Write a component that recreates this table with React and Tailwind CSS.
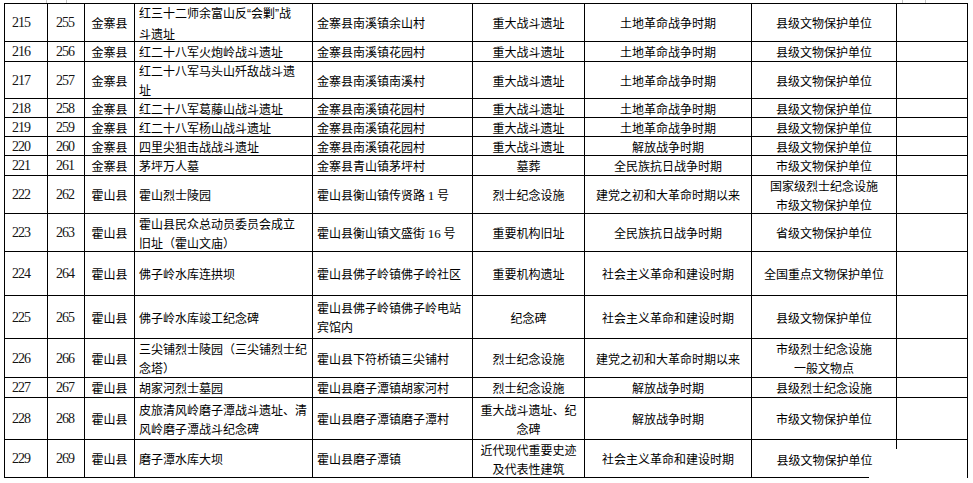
const serif = "font-['Liberation_Serif','Times_New_Roman',serif]";

const N = ({ children }) => (
  <span className="font-['Liberation_Serif','Times_New_Roman',serif] text-[13px]">{children}</span>
);

// narrow quote marks, as in the original document
const Q = ({ children }) => (
  <span className="font-['Liberation_Sans',Arial,sans-serif]">{children}</span>
);

// [序号, 编号, 县区, 名称, 地址, 类别, 时期, 保护级别]
const rows = [
  ["215", "255", "金寨县", [<>红三十二师余富山反<Q>“</Q>会剿<Q>”</Q>战</>, "斗遗址"], ["金寨县南溪镇余山村"], ["重大战斗遗址"], "土地革命战争时期", ["县级文物保护单位"]],
  ["216", "256", "金寨县", ["红二十八军火炮岭战斗遗址"], ["金寨县南溪镇花园村"], ["重大战斗遗址"], "土地革命战争时期", ["县级文物保护单位"]],
  ["217", "257", "金寨县", ["红二十八军马头山歼敌战斗遗", "址"], ["金寨县南溪镇南溪村"], ["重大战斗遗址"], "土地革命战争时期", ["县级文物保护单位"]],
  ["218", "258", "金寨县", ["红二十八军葛藤山战斗遗址"], ["金寨县南溪镇花园村"], ["重大战斗遗址"], "土地革命战争时期", ["县级文物保护单位"]],
  ["219", "259", "金寨县", ["红二十八军杨山战斗遗址"], ["金寨县南溪镇花园村"], ["重大战斗遗址"], "土地革命战争时期", ["县级文物保护单位"]],
  ["220", "260", "金寨县", ["四里尖狙击战战斗遗址"], ["金寨县南溪镇花园村"], ["重大战斗遗址"], "解放战争时期", ["县级文物保护单位"]],
  ["221", "261", "金寨县", ["茅坪万人墓"], ["金寨县青山镇茅坪村"], ["墓葬"], "全民族抗日战争时期", ["市级文物保护单位"]],
  ["222", "262", "霍山县", ["霍山烈士陵园"], [<>霍山县衡山镇传贤路 <N>1</N> 号</>], ["烈士纪念设施"], "建党之初和大革命时期以来", ["国家级烈士纪念设施", "市级文物保护单位"]],
  ["223", "263", "霍山县", ["霍山县民众总动员委员会成立", "旧址（霍山文庙）"], [<>霍山县衡山镇文盛街 <N>16</N> 号</>], ["重要机构旧址"], "全民族抗日战争时期", ["省级文物保护单位"]],
  ["224", "264", "霍山县", ["佛子岭水库连拱坝"], ["霍山县佛子岭镇佛子岭社区"], ["重要机构遗址"], "社会主义革命和建设时期", ["全国重点文物保护单位"]],
  ["225", "265", "霍山县", ["佛子岭水库竣工纪念碑"], ["霍山县佛子岭镇佛子岭电站", "宾馆内"], ["纪念碑"], "社会主义革命和建设时期", ["县级文物保护单位"]],
  ["226", "266", "霍山县", ["三尖铺烈士陵园（三尖铺烈士纪", "念塔）"], ["霍山县下符桥镇三尖铺村"], ["烈士纪念设施"], "建党之初和大革命时期以来", ["市级烈士纪念设施", "一般文物点"]],
  ["227", "267", "霍山县", ["胡家河烈士墓园"], ["霍山县磨子潭镇胡家河村"], ["烈士纪念设施"], "解放战争时期", ["县级烈士纪念设施"]],
  ["228", "268", "霍山县", ["皮旅清风岭磨子潭战斗遗址、清", "风岭磨子潭战斗纪念碑"], ["霍山县磨子潭镇磨子潭村"], ["重大战斗遗址、纪", "念碑"], "解放战争时期", ["市级文物保护单位"]],
  ["229", "269", "霍山县", ["磨子潭水库大坝"], ["霍山县磨子潭镇"], ["近代现代重要史迹", "及代表性建筑"], "社会主义革命和建设时期", ["县级文物保护单位"]],
];

const Lines = ({ lines }) => (
  <div className="flex flex-col">
    {lines.map((l, i) => (
      <div key={i} className="whitespace-nowrap">{l}</div>
    ))}
  </div>
);

const cell = "flex items-center border-r border-b border-black overflow-hidden";

const Row = ({ r, last }) => {
  const [a, b, county, name, place, type, period, level] = r;
  return (
    <>
      <div className={`${cell} pl-[7px] ${serif} text-[14px] tracking-[-1px] text-[#141414]`}>{a}</div>
      <div className={`${cell} pl-[8px] ${serif} text-[14px] tracking-[-1px] text-[#141414]`}>{b}</div>
      <div className={`${cell} justify-center`}>{county}</div>
      <div className={`${cell} pl-[4px]`}>
        <Lines lines={name} />
      </div>
      <div className={`${cell} pl-[4px]`}>
        <Lines lines={place} />
      </div>
      <div className={`${cell} justify-center text-center`}>
        <Lines lines={type} />
      </div>
      <div className={`${cell} justify-center whitespace-nowrap`}>{period}</div>
      {last ? (
        <div className="relative flex items-center justify-center overflow-hidden">
          <Lines lines={level} />
          <div className="absolute right-0 top-0 w-px h-[9px] bg-black" />
          <div className="absolute left-0 bottom-0 w-[117px] h-px bg-black" />
        </div>
      ) : (
        <div className={`${cell} justify-center text-center`}>
          <Lines lines={level} />
        </div>
      )}
      {last ? <div className="border-r border-black" /> : <div className="border-r border-b border-black" />}
    </>
  );
};

export default function App() {
  return (
    <div className="w-[973px] h-[483px] bg-white text-black font-['Noto_Sans_CJK_SC',sans-serif] text-[12px] leading-[19px]">
      <div className="flex h-[3px]">
        <div className="ml-[46px] w-[21px] h-[3px] border-l border-r border-[#c4c4c4]" />
        <div className="ml-[835px] w-[24px] h-[3px] border-l border-r border-[#c4c4c4]" />
      </div>
      <div className="ml-[4px] w-[964px] grid grid-cols-[43px_37px_50px_178px_160px_112px_167px_145px_71px] grid-rows-[38px_20px_37px_19px_19px_19px_20px_38px_38px_44px_43px_39px_20px_42px_38px] border-l border-t border-black">
        {rows.map((r, i) => (
          <Row key={i} r={r} last={i === rows.length - 1} />
        ))}
      </div>
    </div>
  );
}
